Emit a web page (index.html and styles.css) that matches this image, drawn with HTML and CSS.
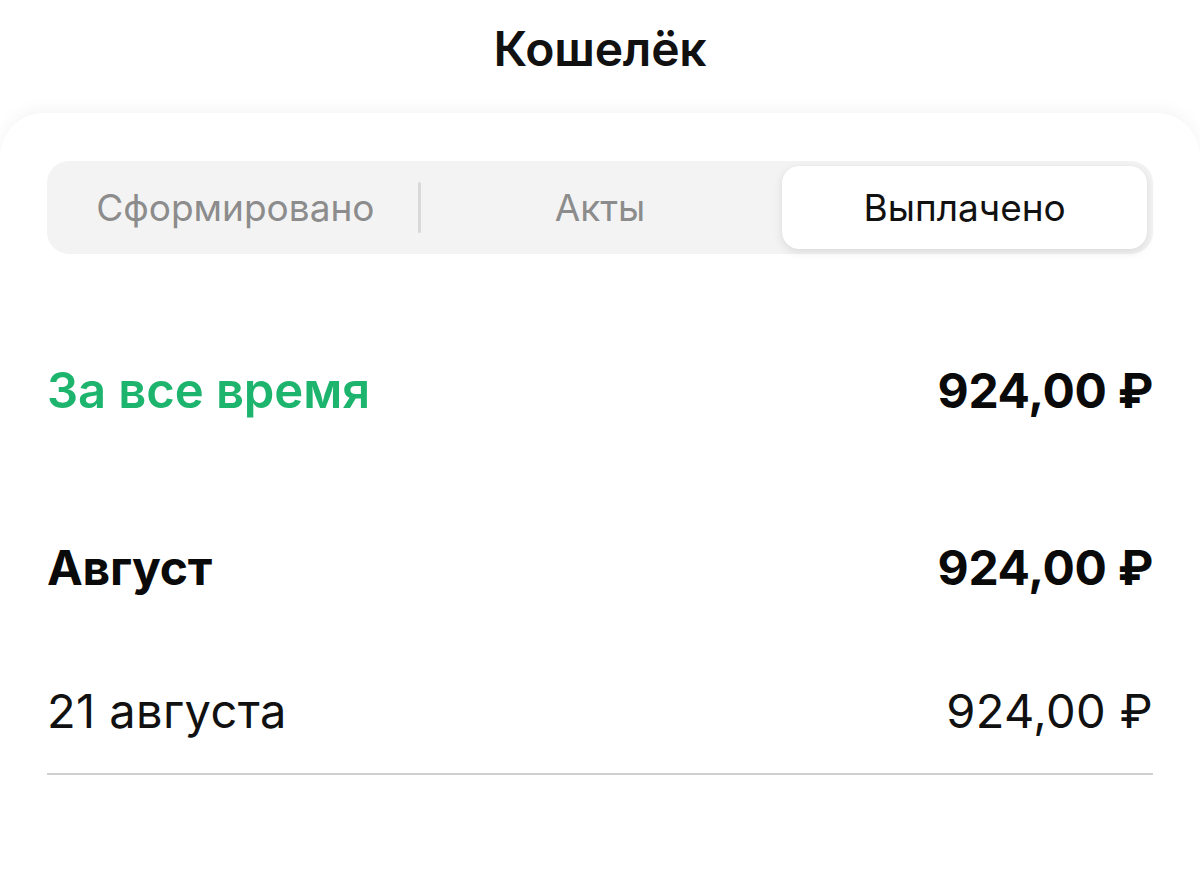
FILE: index.html
```html
<!DOCTYPE html>
<html lang="ru">
<head>
<meta charset="utf-8">
<title>Кошелёк</title>
<link rel="stylesheet" href="styles.css">
</head>
<body>
<header class="top">
  <h1 class="title">Кошелёк</h1>
</header>
<main class="card">
  <div class="segmented">
    <div class="seg">Сформировано</div>
    <div class="seg seg-divided">Акты</div>
    <div class="seg seg-active">Выплачено</div>
  </div>
  <div class="row row-total">
    <span class="label-green">За все время</span>
    <span class="amount-bold">924,00 ₽</span>
  </div>
  <div class="row row-month">
    <span class="label-bold">Август</span>
    <span class="amount-bold">924,00 ₽</span>
  </div>
  <div class="row row-day">
    <span class="label">21 августа</span>
    <span class="amount">924,00 ₽</span>
  </div>
</main>
</body>
</html>
```
FILE: styles.css
```css
* { box-sizing: border-box; }
html, body { margin: 0; padding: 0; background: #ffffff; }
body {
  width: 1200px;
  height: 896px;
  overflow: hidden;
  font-family: Inter, "Noto Sans", "Liberation Sans", sans-serif;
  color: #111111;
}
.top {
  height: 113px;
  display: flex;
  align-items: center;
  justify-content: center;
  background: #ffffff;
}
.title {
  margin: 0;
  font-size: 48px;
  font-weight: 600;
  letter-spacing: -0.2px;
  padding-bottom: 16px;
}
.card {
  background: #ffffff;
  border-radius: 44px 44px 0 0;
  box-shadow: 0 -6px 14px rgba(0,0,0,0.035);
  padding: 48px 47px 0;
  height: 783px;
}
.segmented {
  display: flex;
  height: 93px;
  padding: 5px 6px;
  background: #f3f3f3;
  border-radius: 22px;
}
.seg {
  flex: 1;
  display: flex;
  align-items: center;
  justify-content: center;
  font-size: 37px;
  color: #8c8c8c;
  position: relative;
}
.seg-divided::before {
  content: "";
  position: absolute;
  left: 0;
  top: 16px;
  bottom: 16px;
  width: 3px;
  background: #d8d8d8;
  border-radius: 2px;
}
.seg-active {
  background: #ffffff;
  color: #111111;
  border-radius: 17px;
  box-shadow: 0 3px 10px rgba(0,0,0,0.10), 0 0 1px rgba(0,0,0,0.08);
}
.row {
  display: flex;
  justify-content: space-between;
  align-items: center;
  height: 76px;
}
.row-total { margin-top: 98px; }
.row-month { margin-top: 101px; }
.row-day {
  margin-top: 68px;
  height: 102px;
  padding-bottom: 26px;
  border-bottom: 2px solid #d0d0d0;
}
.label-green {
  font-size: 49px;
  font-weight: 600;
  color: #1db56e;
  letter-spacing: -0.1px;
}
.label-bold, .amount-bold {
  font-size: 48px;
  font-weight: 700;
  color: #0a0a0a;
  letter-spacing: -0.3px;
}
.label, .amount {
  font-size: 47px;
  font-weight: 400;
  color: #111111;
  letter-spacing: 0.4px;
}
```
